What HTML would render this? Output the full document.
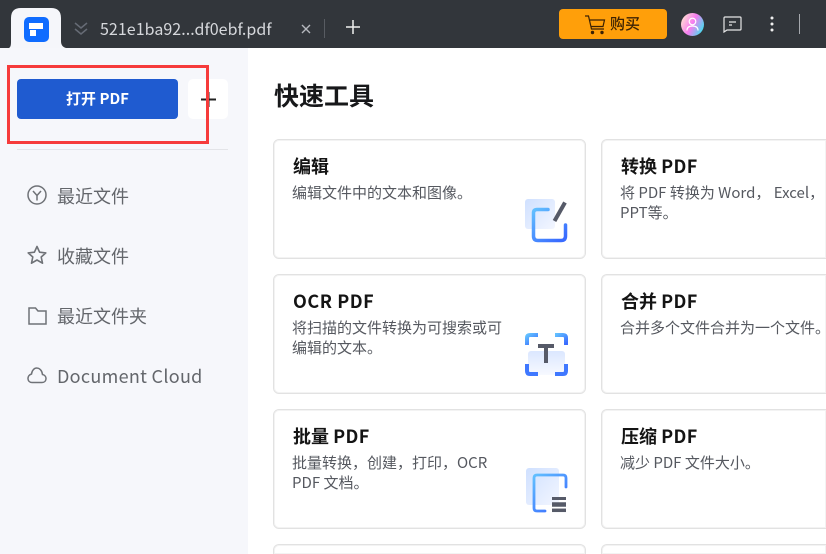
<!DOCTYPE html>
<html lang="zh"><head><meta charset="utf-8"><style>
html,body{margin:0;padding:0;width:826px;height:554px;overflow:hidden}
body{position:relative;background:#fff;font-family:"Noto Sans CJK SC","Liberation Sans",sans-serif}
#root{position:absolute;left:0;top:0;width:826px;height:554px;overflow:hidden}
.a{position:absolute;white-space:nowrap}
.card{position:absolute;width:311px;height:118px;border:1px solid #e2e2e2;box-shadow:inset 0 0 0 1px #f3f3f3;border-radius:6px;background:#fff;box-sizing:content-box}
.t{position:absolute;left:19px;top:13px;font-size:18px;line-height:26px;font-weight:700;color:#141414;white-space:nowrap}
.d{position:absolute;left:18px;top:43px;font-size:15px;line-height:20px;color:#55585f;white-space:nowrap}
.nav{position:absolute;left:57px;font-size:18px;line-height:26px;color:#63666b;white-space:nowrap}
svg{position:absolute}
</style></head><body><div id="root">
<div class="a" style="left:0;top:0;width:826px;height:48px;background:#32363b"></div>
<div class="a" style="left:0;top:48px;width:248px;height:506px;background:#f6f7fb"></div>
<svg style="left:0;top:0" width="80" height="48"><path d="M9 48 C11 47 11 44 11 41 V18 Q11 8 21 8 H51 Q61 8 61 18 V41 C61 44 62 47 66 48 Z" fill="#f5f6fa"/></svg>
<svg style="left:24px;top:17px" width="25" height="25"><rect width="25" height="25" rx="5" fill="#0f6cff"/><rect x="5" y="6" width="14" height="6" fill="#fff"/><rect x="6" y="13" width="6" height="6" fill="#fff"/></svg>
<svg style="left:74px;top:22px" width="14" height="14" fill="none" stroke="#666b75" stroke-width="1.500"><path d="M1 1l6 5 6-5M1 7l6 5 6-5"/></svg>
<div class="a" style="left:100px;top:17px;font-size:16px;line-height:22px;color:#d6d8dc;letter-spacing:.05px">521e1ba92...df0ebf.pdf</div>
<svg style="left:301px;top:24px" width="10" height="10" stroke="#b5b8bd" stroke-width="1.400"><path d="M1 1l8 8M9 1l-8 8"/></svg>
<div class="a" style="left:324px;top:19px;width:1px;height:19px;background:#585c62"></div>
<svg style="left:346px;top:20px" width="14" height="14" stroke="#f0f0f0" stroke-width="1.500"><path d="M7 0v14M0 7h14"/></svg>
<div class="a" style="left:559px;top:9px;width:108px;height:30px;border-radius:4px;background:#ff9f0a"></div>
<svg style="left:585px;top:15px" width="21" height="20" fill="none" stroke="#3c2204" stroke-width="1.200"><path d="M0 1H3.500L6.500 14H19M5 5H19.500L18 11.500H6"/><circle cx="7.500" cy="17.500" r="1.100" fill="#3c2204"/><circle cx="17" cy="17.500" r="1.100" fill="#3c2204"/></svg>
<div class="a" style="left:610px;top:13px;font-size:15px;line-height:22px;font-weight:500;color:#3c2204">购买</div>
<svg style="left:681px;top:13px" width="23" height="23"><defs><linearGradient id="av" x1="0" y1="0.200" x2="1" y2="0.700"><stop offset="0" stop-color="#ffe5d0"/><stop offset="0.500" stop-color="#f77cf0"/><stop offset="1" stop-color="#3fe0f0"/></linearGradient></defs><circle cx="11.500" cy="11.500" r="11.500" fill="url(#av)"/><circle cx="11.500" cy="8.500" r="3.300" fill="none" stroke="#fff" stroke-width="1.200"/><path d="M6 17.500C6 14.500 8 13 11.500 13S17 14.500 17 17.500" fill="none" stroke="#fff" stroke-width="1.200"/></svg>
<svg style="left:723px;top:16px" width="19" height="17" fill="none" stroke="#e6e6e6" stroke-width="1.200"><path d="M2 1H17Q18 1 18 2V13Q18 14 17 14H4L1 16V2Q1 1 2 1Z"/><path d="M6 6H13M6 9H9"/></svg>
<svg style="left:770px;top:16px" width="4" height="16" fill="#f0f0f0"><circle cx="2" cy="2" r="1.500"/><circle cx="2" cy="8" r="1.500"/><circle cx="2" cy="14" r="1.500"/></svg>
<div class="a" style="left:799px;top:14px;width:1px;height:20px;background:#a5a8ad"></div>

<div class="a" style="left:17px;top:79px;width:161px;height:40px;border-radius:4px;background:#1f5bd0;color:#fff;font-size:15px;line-height:40px;font-weight:700;text-align:center">打开 PDF</div>
<div class="a" style="left:188px;top:79px;width:40px;height:40px;border-radius:5px;background:#fff"></div>
<svg style="left:201px;top:92px" width="15" height="15" stroke="#222" stroke-width="2"><path d="M7.500 0v15M0 7.500h15"/></svg>
<div class="a" style="left:7px;top:65px;width:202px;height:79px;box-sizing:border-box;border:3px solid #f63b3b"></div>
<div class="a" style="left:17px;top:149px;width:211px;height:1px;background:#e3e4e8"></div>

<svg style="left:27px;top:185px" width="20" height="20" fill="none" stroke="#6f7277" stroke-width="1.500"><circle cx="10" cy="10" r="9"/><path d="M6 6L10 10.500L14 6M10 10.500V15.500"/></svg>
<div class="nav" style="top:183px">最近文件</div>
<svg style="left:27px;top:245px" width="20" height="20" fill="none" stroke="#6f7277" stroke-width="1.600" stroke-linejoin="round"><path d="M10 1.500L12.600 7.200L18.800 7.900L14.200 12L15.500 18.200L10 15L4.500 18.200L5.800 12L1.200 7.900L7.400 7.200Z"/></svg>
<div class="nav" style="top:243px">收藏文件</div>
<svg style="left:28px;top:306px" width="19" height="19" fill="none" stroke="#6f7277" stroke-width="1.500"><path d="M1 2H7.500L10 5H18V18H1Z"/></svg>
<div class="nav" style="top:303px">最近文件夹</div>
<svg style="left:27px;top:366px" width="20" height="18" fill="none" stroke="#6f7277" stroke-width="1.500"><path d="M5 16.500H15C20 16.500 20.500 9.500 15.500 8.500C14.500 0 5.500 0 4.500 8C-0.500 9.500 0 16.500 5 16.500Z"/></svg>
<div class="nav" style="top:363px;letter-spacing:.3px">Document Cloud</div>

<div class="a" style="left:274px;top:77px;font-size:25px;line-height:36px;font-weight:700;color:#17181a">快速工具</div>

<div class="card" style="left:273px;top:139px"><div class="t">编辑</div><div class="d">编辑文件中的文本和图像。</div></div>
<div class="card" style="left:601px;top:139px;width:224px;border-right:none;border-radius:6px 0 0 6px"><div class="t">转换 <span style="letter-spacing:.4px">PDF</span></div><div class="d">将 PDF 转换为 Word， Excel，<br>PPT等。</div></div>
<div class="card" style="left:273px;top:274px"><div class="t" style="letter-spacing:.55px">OCR PDF</div><div class="d">将扫描的文件转换为可搜索或可<br>编辑的文本。</div></div>
<div class="card" style="left:601px;top:274px;width:224px;border-right:none;border-radius:6px 0 0 6px"><div class="t">合并 <span style="letter-spacing:.4px">PDF</span></div><div class="d">合并多个文件合并为一个文件。</div></div>
<div class="card" style="left:273px;top:409px"><div class="t">批量 <span style="letter-spacing:.4px">PDF</span></div><div class="d">批量转换，创建，打印，OCR<br>PDF 文档。</div></div>
<div class="card" style="left:601px;top:409px;width:224px;border-right:none;border-radius:6px 0 0 6px"><div class="t">压缩 <span style="letter-spacing:.4px">PDF</span></div><div class="d">减少 PDF 文件大小。</div></div>
<div class="card" style="left:273px;top:544px;height:9px;border-bottom:none;border-radius:6px 6px 0 0"></div>
<div class="card" style="left:601px;top:544px;width:224px;height:9px;border-bottom:none;border-right:none;border-radius:6px 0 0 0"></div>

<svg style="left:525px;top:198px" width="44" height="46"><defs><linearGradient id="p" x1="0" y1="0" x2="1" y2="1"><stop offset="0" stop-color="#cfe0ff"/><stop offset="1" stop-color="#f3f6ff"/></linearGradient><linearGradient id="b" x1="0" y1="0" x2="0.800" y2="1"><stop offset="0" stop-color="#62c0ff"/><stop offset="1" stop-color="#3a6cff"/></linearGradient><linearGradient id="q" x1="0" y1="0" x2="0" y2="1"><stop offset="0" stop-color="#dbe7ff"/><stop offset="1" stop-color="#f7f9ff"/></linearGradient></defs><rect x="0" y="1" width="30" height="30" rx="3" fill="url(#p)"/><path d="M23 11.500H12Q8.500 11.500 8.500 15V38Q8.500 42.500 13 42.500H36Q40.500 42.500 40.500 38V27" fill="none" stroke="url(#b)" stroke-width="3.500" stroke-linecap="round" stroke-linejoin="round"/><path d="M29.500 23L40 4.500" stroke="#565a68" stroke-width="4"/></svg>
<svg style="left:525px;top:333px" width="44" height="44" fill="none"><rect x="3" y="18" width="37" height="24" rx="3" fill="url(#q)"/><g stroke="url(#b)" stroke-width="4" stroke-linejoin="round"><path d="M13 2H5Q2 2 2 5V12"/><path d="M30 2H38Q41 2 41 5V12"/></g><g stroke="#3f78ff" stroke-width="4" stroke-linejoin="round"><path d="M2 31V38Q2 41 5 41H13"/><path d="M41 31V38Q41 41 38 41H30"/></g><path d="M13 13H29" stroke="#565a68" stroke-width="4"/><path d="M21 13V30" stroke="#565a68" stroke-width="4"/></svg>
<svg style="left:526px;top:467px" width="44" height="48" fill="none"><rect x="0" y="1" width="33" height="37" rx="3" fill="url(#p)"/><path d="M40 20V11Q40 8 37 8H11Q8 8 8 11V41Q8 44 11 44H19" stroke="url(#b)" stroke-width="2.800" stroke-linecap="round"/><path d="M26 31.500H40" stroke="#565a68" stroke-width="3"/><path d="M26 37.500H40" stroke="#565a68" stroke-width="4.500"/><path d="M26 43.300H40" stroke="#565a68" stroke-width="3.500"/></svg>
</div></body></html>
